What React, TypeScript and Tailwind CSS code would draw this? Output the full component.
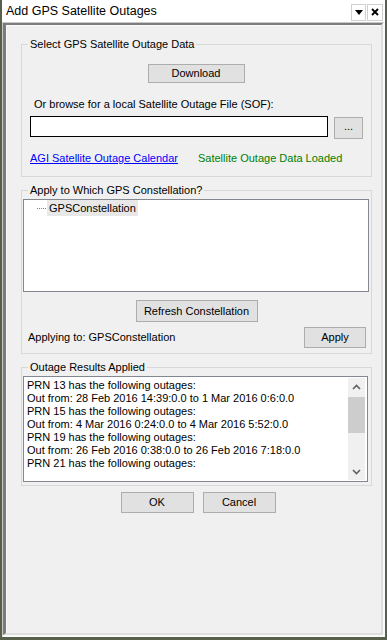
import React from 'react';

const FONT = { fontFamily: '"Liberation Sans", Arial, sans-serif' };

const Btn = ({ label, className }: { label: string; className: string }) => (
  <div
    className={`flex items-center justify-center bg-[#e1e1e1] border border-[#adadad] text-[11px] leading-none text-black ${className}`}
  >
    {label}
  </div>
);

const Group = ({
  title,
  className,
  children,
}: {
  title: string;
  className: string;
  children: React.ReactNode;
}) => (
  <fieldset className={`ml-[14px] w-[351px] border border-[#d8d8d8] ${className}`}>
    <legend className="ml-[6px] px-[2px] text-[11px] leading-[13px] text-black">{title}</legend>
    {children}
  </fieldset>
);

const Chevron = ({ up }: { up?: boolean }) => (
  <svg width="9" height="6" viewBox="0 0 9 6">
    <path
      d={up ? 'M1 5 L4.5 1.5 L8 5' : 'M1 1 L4.5 4.5 L8 1'}
      stroke="#606060"
      strokeWidth="1.6"
      fill="none"
    />
  </svg>
);

const results = [
  'PRN 13 has the following outages:',
  'Out from: 28 Feb 2016 14:39:0.0 to 1 Mar 2016 0:6:0.0',
  'PRN 15 has the following outages:',
  'Out from: 4 Mar 2016 0:24:0.0 to 4 Mar 2016 5:52:0.0',
  'PRN 19 has the following outages:',
  'Out from: 26 Feb 2016 0:38:0.0 to 26 Feb 2016 7:18:0.0',
  'PRN 21 has the following outages:',
];

export default function App() {
  return (
    <div
      className="w-[387px] h-[640px] bg-[#56604a] pl-[2px] pr-[2px] pb-[3px] flex flex-col"
      style={FONT}
    >
      {/* Title bar */}
      <div className="h-[22px] bg-white flex items-center pl-[4px] pr-[2px]">
        <span className="text-[12.5px] text-black flex-1">Add GPS Satellite Outages</span>
        <div className="flex gap-[1px] mt-[2px]">
          <div className="w-[15px] h-[17px] border border-[#d0d0d0] bg-white flex items-center justify-center">
            <svg width="8" height="5" viewBox="0 0 8 5">
              <path d="M0 0 H8 L4 5 Z" fill="#000" />
            </svg>
          </div>
          <div className="w-[16px] h-[17px] border border-[#d0d0d0] bg-white flex items-center justify-center">
            <svg width="8" height="8" viewBox="0 0 8 8">
              <path d="M1 1 L7 7 M7 1 L1 7" stroke="#000" strokeWidth="1.8" />
            </svg>
          </div>
        </div>
      </div>

      {/* Window frame */}
      <div className="flex-1 flex flex-col border-t border-l border-t-[#c8c8c8] border-l-[#c8c8c8] border-r-2 border-b-2 border-r-[#fafafa] border-b-[#fafafa]">
        <div className="flex-1 flex flex-col border-t-2 border-l-[3px] border-t-[#7c7c7c] border-l-[#7c7c7c] border-r-2 border-b-2 border-r-[#dedede] border-b-[#dedede]">
          <div className="flex-1 flex flex-col bg-[#f0f0f0] border-t border-l border-[#fafafa]">
            {/* Group 1 */}
            <Group title="Select GPS Satellite Outage Data" className="mt-[12px] pb-[11px]">
              <div className="flex justify-center mt-[13px] pr-[1px]">
                <Btn label="Download" className="w-[97px] h-[19px]" />
              </div>
              <div className="mt-[15px] pl-[12px] text-[11px] leading-[13px] text-black">
                Or browse for a local Satellite Outage File (SOF):
              </div>
              <div className="flex items-start mt-[5px] pl-[8px]">
                <div className="w-[298px] h-[21px] bg-white border border-black" />
                <Btn label="..." className="ml-[6px] mt-[1px] w-[29px] h-[22px] pb-[4px]" />
              </div>
              <div className="flex mt-[13px] pl-[8px] text-[11px] leading-[13px]">
                <span className="text-[#0000ff] underline">AGI Satellite Outage Calendar</span>
                <span className="ml-[20px] text-[#008000]">Satellite Outage Data Loaded</span>
              </div>
            </Group>

            {/* Group 2 */}
            <Group title="Apply to Which GPS Constellation?" className="mt-[7px] pb-[5px]">
              <div className="mt-[2px] ml-[1px] w-[346px] h-[93px] bg-white border border-[#828790]">
                <div className="flex items-center h-[16px]">
                  <div className="ml-[13px] w-[9px] border-t border-dotted border-[#808080]" />
                  <span className="ml-[1px] px-[2px] h-[16px] bg-[#e8e8e8] text-[11px] leading-[16px] text-black">
                    GPSConstellation
                  </span>
                </div>
              </div>
              <div className="flex justify-center mt-[8px]">
                <Btn label="Refresh Constellation" className="w-[122px] h-[22px]" />
              </div>
              <div className="flex items-center mt-[5px] pl-[6px] pr-[5px]">
                <span className="flex-1 text-[11px] text-black">Applying to: GPSConstellation</span>
                <Btn label="Apply" className="w-[62px] h-[21px]" />
              </div>
            </Group>

            {/* Group 3 */}
            <Group title="Outage Results Applied" className="mt-[7px] pb-[3px]">
              <div className="mt-[2px] ml-[1px] w-[345px] h-[106px] bg-white border border-[#828790] flex p-[1px]">
                <div className="flex-1 pl-[2px] pt-[1px] overflow-hidden">
                  {results.map((line) => (
                    <div key={line} className="text-[11px] leading-[13px] text-black whitespace-nowrap">
                      {line}
                    </div>
                  ))}
                </div>
                <div className="w-[17px] mr-[1px] bg-[#f0f0f0] flex flex-col">
                  <div className="h-[17px] flex items-center justify-center">
                    <Chevron up />
                  </div>
                  <div className="mt-[2px] h-[36px] bg-[#cdcdcd]" />
                  <div className="flex-1" />
                  <div className="h-[17px] flex items-center justify-center">
                    <Chevron />
                  </div>
                </div>
              </div>
            </Group>

            {/* Dialog buttons */}
            <div className="flex justify-center gap-[9px] mt-[6px] pl-[8px]">
              <Btn label="OK" className="w-[73px] h-[21px]" />
              <Btn label="Cancel" className="w-[73px] h-[21px]" />
            </div>
          </div>
        </div>
      </div>
    </div>
  );
}
